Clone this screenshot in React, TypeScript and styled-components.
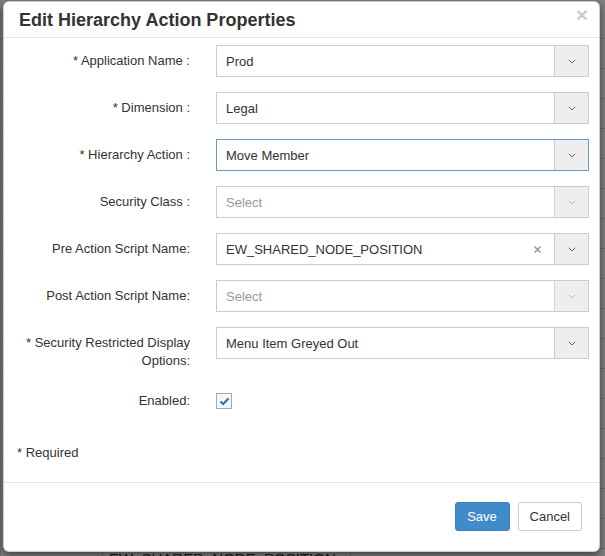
import React from 'react';
import styled, { createGlobalStyle } from 'styled-components';

const Global = createGlobalStyle`
  html, body { margin: 0; padding: 0; }
  body {
    font-family: "Liberation Sans", Arial, sans-serif;
    font-size: 13px;
    color: #333;
    overflow: hidden;
  }
  * { box-sizing: border-box; }
`;

const Page = styled.div`
  position: relative;
  width: 605px;
  height: 556px;
  overflow: hidden;
  background: #fff;
`;

const BgTable = styled.div`
  display: flex;
  flex-direction: column;
  padding-top: 9px;
`;

const BgRow = styled.div`
  display: grid;
  grid-template-columns: 102px 248px 1fr;
  height: 30px;
  border-bottom: 1px solid #d6d6d6;
`;

const BgCell = styled.div`
  border-left: 1px solid #d6d6d6;
  padding: 1px 6px;
  font-size: 15px;
  line-height: 18px;
  color: #333;
  white-space: nowrap;
`;

const Overlay = styled.div`
  position: absolute;
  inset: 0;
  background: rgba(0, 0, 0, 0.5);
  display: flex;
  align-items: flex-start;
  padding: 1px 5px 0 3px;
`;

const Modal = styled.div`
  flex: 1;
  background: #fff;
  border: 1px solid rgba(0, 0, 0, 0.2);
  border-radius: 6px;
  box-shadow: 0 3px 9px rgba(0, 0, 0, 0.5);
  display: flex;
  flex-direction: column;
`;

const Header = styled.div`
  height: 36px;
  border-bottom: 1px solid #e5e5e5;
  display: flex;
  align-items: center;
  justify-content: space-between;
  padding: 0 11px 0 15px;
`;

const Title = styled.h4`
  margin: 0;
  font-size: 18px;
  font-weight: bold;
  color: #333;
  line-height: 20px;
`;

const Close = styled.button`
  align-self: flex-start;
  margin-top: 1px;
  border: 0;
  background: none;
  padding: 0;
  font-family: "Liberation Sans", Arial, sans-serif;
  font-size: 21px;
  font-weight: bold;
  line-height: 24px;
  color: #000;
  opacity: 0.2;
`;

const Body = styled.div`
  padding: 7px 10px 20px 0;
`;

const FormGrid = styled.div`
  display: grid;
  grid-template-columns: 186px 1fr;
  column-gap: 26px;
  row-gap: 15px;
`;

const Label = styled.label`
  text-align: right;
  padding-top: 7px;
  line-height: 18px;
  color: #333;
`;

const SelectBox = styled.div<{ $focused?: boolean }>`
  height: 32px;
  display: flex;
  align-items: stretch;
  border: 1px solid ${p => (p.$focused ? '#6a97c3' : '#ccc')};
  background: #fff;
`;

const Value = styled.div<{ $placeholder?: boolean }>`
  flex: 1;
  display: flex;
  align-items: center;
  padding-left: 9px;
  color: ${p => (p.$placeholder ? '#999' : '#333')};
  white-space: nowrap;
  overflow: hidden;
`;

const ClearBtn = styled.span`
  width: 20px;
  display: flex;
  align-items: center;
  justify-content: flex-start;
  color: #999;
`;

const Addon = styled.div<{ $disabled?: boolean }>`
  width: 34px;
  border-left: 1px solid ${p => (p.$disabled ? '#d4d4d4' : '#ccc')};
  background: #eee;
  display: flex;
  align-items: center;
  justify-content: center;
  color: ${p => (p.$disabled ? '#b8b8b8' : '#666')};
`;

const CheckCell = styled.div`
  padding-top: 8px;
`;

const CheckBox = styled.span`
  display: flex;
  width: 16px;
  height: 16px;
  border: 1px solid #a8a8a8;
  background: #f3f6fb;
  align-items: center;
  justify-content: center;
`;

const Required = styled.p`
  margin: 34px 0 0;
  padding-left: 13px;
  line-height: 18px;
`;

const Footer = styled.div`
  border-top: 1px solid #e5e5e5;
  padding: 19px 17px 20px;
  display: flex;
  justify-content: flex-end;
  gap: 8px;
`;

const Button = styled.button<{ $primary?: boolean }>`
  height: 29px;
  padding: 0 11px;
  min-width: ${p => (p.$primary ? '55px' : '64px')};
  font-family: "Liberation Sans", Arial, sans-serif;
  font-size: 13px;
  border-radius: 3px;
  border: 1px solid ${p => (p.$primary ? '#3b7fc0' : '#ccc')};
  background: ${p => (p.$primary ? '#428bca' : '#fff')};
  color: ${p => (p.$primary ? '#fff' : '#333')};
`;

const Chevron = () => (
  <svg width="8" height="5" viewBox="0 0 8 5">
    <polyline points="0.8,0.8 4,4 7.2,0.8" fill="none" stroke="currentColor" strokeWidth="1" />
  </svg>
);

const ClearIcon = () => (
  <svg width="7" height="7" viewBox="0 0 7 7">
    <path d="M1 1 L6 6 M6 1 L1 6" stroke="currentColor" strokeWidth="1.6" strokeLinecap="round" />
  </svg>
);

type SelectProps = {
  value?: string;
  placeholder?: string;
  focused?: boolean;
  disabled?: boolean;
  clearable?: boolean;
};

const Select = ({ value, placeholder, focused, disabled, clearable }: SelectProps) => (
  <SelectBox $focused={focused}>
    <Value $placeholder={!value}>{value || placeholder}</Value>
    {clearable && (
      <ClearBtn>
        <ClearIcon />
      </ClearBtn>
    )}
    <Addon $disabled={disabled}>
      <Chevron />
    </Addon>
  </SelectBox>
);

const rows: { label: string; select: SelectProps }[] = [
  { label: '* Application Name :', select: { value: 'Prod' } },
  { label: '* Dimension :', select: { value: 'Legal' } },
  { label: '* Hierarchy Action :', select: { value: 'Move Member', focused: true } },
  { label: 'Security Class :', select: { placeholder: 'Select', disabled: true } },
  { label: 'Pre Action Script Name:', select: { value: 'EW_SHARED_NODE_POSITION', clearable: true } },
  { label: 'Post Action Script Name:', select: { placeholder: 'Select', disabled: true } },
  { label: '* Security Restricted Display Options:', select: { value: 'Menu Item Greyed Out' } },
];

export default function App() {
  const bgRows = Array.from({ length: 18 });
  return (
    <Page>
      <Global />
      <BgTable>
        {bgRows.map((_, i) => (
          <BgRow key={i}>
            <BgCell />
            <BgCell />
            <BgCell />
          </BgRow>
        ))}
        <BgRow>
          <BgCell />
          <BgCell>EW_SHARED_NODE_POSITION</BgCell>
          <BgCell />
        </BgRow>
      </BgTable>
      <Overlay>
        <Modal>
          <Header>
            <Title>Edit Hierarchy Action Properties</Title>
            <Close>×</Close>
          </Header>
          <Body>
            <FormGrid>
              {rows.map(r => (
                <React.Fragment key={r.label}>
                  <Label>{r.label}</Label>
                  <Select {...r.select} />
                </React.Fragment>
              ))}
              <Label>Enabled:</Label>
              <CheckCell>
                <CheckBox>
                  <svg width="11" height="9" viewBox="0 0 11 9">
                    <path d="M1.5 4.5 L4.2 7 L9.5 1.5" fill="none" stroke="#3a6fb3" strokeWidth="2.2" />
                  </svg>
                </CheckBox>
              </CheckCell>
            </FormGrid>
            <Required>* Required</Required>
          </Body>
          <Footer>
            <Button $primary>Save</Button>
            <Button>Cancel</Button>
          </Footer>
        </Modal>
      </Overlay>
    </Page>
  );
}
